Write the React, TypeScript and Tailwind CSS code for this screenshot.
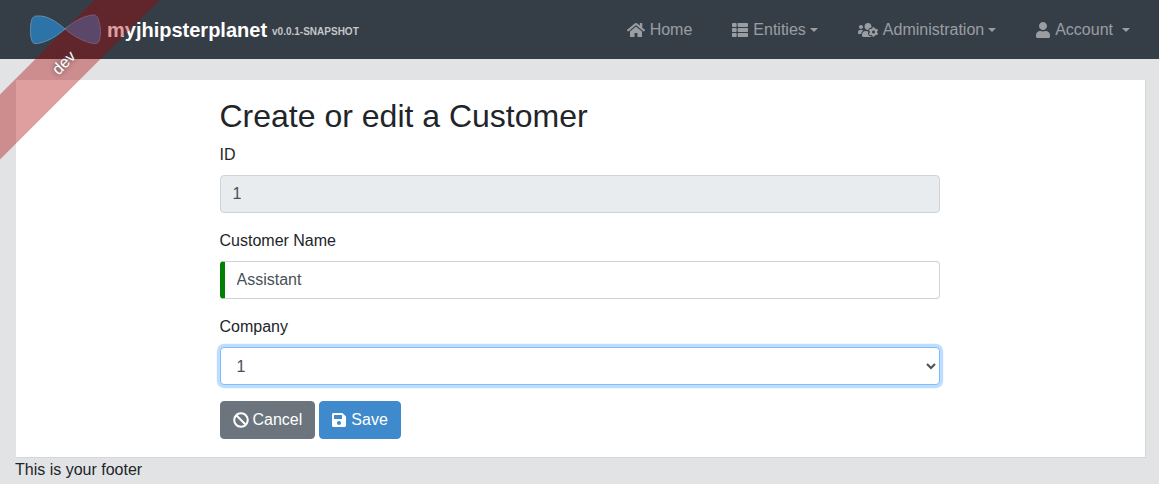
import React from 'react';
import { FaHome, FaThList, FaUsersCog, FaUser, FaBan, FaSave } from 'react-icons/fa';

const Caret = () => (
  <span className="ml-1 inline-block w-0 h-0 border-x-[4.8px] border-x-transparent border-t-[4.8px] border-t-current" />
);

const NavItem = ({ icon, label, caret, caretGap }: { icon: React.ReactNode; label: string; caret?: boolean; caretGap?: boolean }) => (
  <a className="flex items-center text-white/50 cursor-pointer">
    {icon}
    <span>{label}</span>
    {caretGap && <span className="w-[5px]" />}
    {caret && <Caret />}
  </a>
);

const Logo = () => (
  <svg width="72" height="32" viewBox="0 0 72 32" className="shrink-0">
    <path
      d="M35 15 C28 9 18 1 7 2 C3 2 2 4 1 9 C0 15 0 22 2 27 C3 30 6 30 10 29 C19 27 28 21 35 15 Z"
      fill="#2c73a8"
      stroke="#5f8fb2"
      strokeWidth="1"
    />
    <path
      d="M35 15 C42 9 52 2 63 1 C67 1 68 3 69 8 C71 14 71 22 69 27 C68 30 65 30 61 29 C52 27 42 21 35 15 Z"
      fill="#2c73a8"
      stroke="#5f8fb2"
      strokeWidth="1"
    />
  </svg>
);

export default function App() {
  return (
    <div className="relative min-h-[484px] overflow-hidden bg-[#e2e3e5] text-[16px] text-[#212529] font-['Liberation_Sans',Arial,sans-serif]">
      <div className="absolute left-[-56px] top-[40px] w-[240px] z-50 -rotate-45 bg-[rgba(170,0,0,0.375)] pointer-events-none text-center text-white py-[11px] leading-[24px] [text-shadow:0_0_5px_#444]">
        dev
      </div>

      <nav className="h-[59px] bg-[#353d47] flex items-center justify-between pl-[30px] pr-[29px]">
        <div className="flex items-center">
          <Logo />
          <span className="ml-[5px] text-[20px] font-bold text-white leading-none">myjhipsterplanet</span>
          <span className="ml-[5px] mt-[4px] text-[10px] font-bold text-[#c4c6c8] leading-none">v0.0.1-SNAPSHOT</span>
        </div>
        <div className="flex items-center gap-10">
          <NavItem icon={<FaHome className="w-[18px] h-4 mr-[5px]" />} label="Home" />
          <NavItem icon={<FaThList className="w-4 h-4 mr-[5px]" />} label="Entities" caret />
          <NavItem icon={<FaUsersCog className="w-5 h-4 mr-[5px]" />} label="Administration" caret />
          <NavItem icon={<FaUser className="w-[14px] h-4 mr-[5px]" />} label="Account" caret caretGap />
        </div>
      </nav>

      <main className="mx-4 mt-[21px] mr-[13px] h-[378px] bg-white border-b border-r border-[#d5d6d8] flex justify-center pl-[-2px]">
        <div className="w-[720px] -ml-[2px]">
          <h2 className="text-[32px] leading-[38px] mt-[17px] mb-2 font-normal">Create or edit a Customer</h2>
          <div className="mb-4">
            <label className="block mb-2 leading-6">ID</label>
            <input
              readOnly
              value="1"
              className="block w-full h-[38px] px-3 bg-[#e9ecef] border border-[#ced4da] rounded-[4px] text-[#495057] outline-none"
            />
          </div>
          <div className="mb-4">
            <label className="block mb-2 leading-6">Customer Name</label>
            <input
              readOnly
              value="Assistant"
              className="block w-full h-[38px] px-3 bg-white border border-[#ced4da] border-l-[5px] border-l-[#008000] rounded-[4px] text-[#495057] outline-none"
            />
          </div>
          <div className="mb-4">
            <label className="block mb-2 leading-6">Company</label>
            <select
              defaultValue="1"
              className="block w-full h-[38px] px-3 bg-white border border-[#80bdff] rounded-[4px] text-[#495057] outline-none shadow-[0_0_0_3.2px_rgba(0,123,255,0.25)]"
            >
              <option value="1">1</option>
            </select>
          </div>
          <div className="flex gap-1">
            <button className="flex items-center h-[38px] px-3 bg-[#6c757d] border border-[#6c757d] rounded-[4px] text-white">
              <FaBan className="w-4 h-4 mr-1" />
              <span>Cancel</span>
            </button>
            <button className="flex items-center h-[38px] px-3 bg-[#3e8acc] border border-[#3e8acc] rounded-[4px] text-white">
              <FaSave className="w-[14px] h-4 mr-[5px]" />
              <span>Save</span>
            </button>
          </div>
        </div>
      </main>

      <footer className="pl-[15px] leading-6">This is your footer</footer>
    </div>
  );
}
